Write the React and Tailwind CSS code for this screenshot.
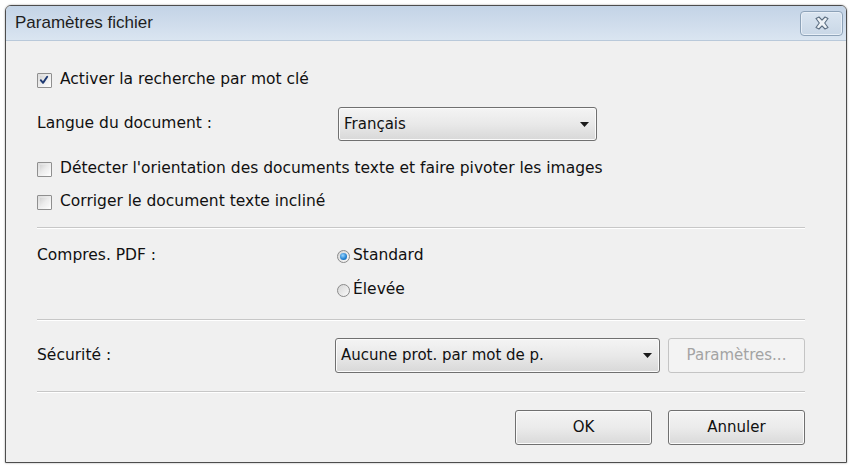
import React from "react";

const font = { fontFamily: '"DejaVu Sans", Verdana, sans-serif' };
const titleFont = { fontFamily: '"Liberation Sans", Arial, sans-serif' };

function Checkbox({ checked }) {
  return (
    <span className="relative flex h-[15px] w-[15px] shrink-0 items-center justify-center rounded-[1px] border border-[#8f8f8f] bg-gradient-to-br from-[#dcdcdc] to-[#ffffff]">
      <span className="absolute inset-[2px] bg-gradient-to-br from-[#d4d4d4] via-[#ececec] to-[#f8f8f8]" />
      {checked && (
        <svg viewBox="0 0 15 15" className="absolute inset-0 h-[13px] w-[13px]">
          <path d="M3.2 7.2 L5.8 10.2 L10.6 3.2" fill="none" stroke="#1f3a73" strokeWidth="2.2" strokeLinecap="round" strokeLinejoin="round" />
        </svg>
      )}
    </span>
  );
}

function Radio({ checked }) {
  return (
    <span className="relative flex h-[13px] w-[13px] shrink-0 items-center justify-center rounded-full border border-[#8a8a8a] bg-gradient-to-br from-[#d6d6d6] to-[#fafafa]">
      {checked && (
        <span className="h-[7px] w-[7px] rounded-full bg-[radial-gradient(circle_at_40%_35%,#9ad6ff,#1f7fd0_60%,#145a9e)]" />
      )}
    </span>
  );
}

function Arrow() {
  return (
    <svg viewBox="0 0 9 5" className="h-[5px] w-[9px]">
      <path d="M0 0 H9 L4.5 5 Z" fill="#1a1a1a" />
    </svg>
  );
}

function Separator() {
  return (
    <div className="flex flex-col">
      <div className="h-px bg-[#c7c7c7]" />
      <div className="h-px bg-white" />
    </div>
  );
}

function Button({ children, disabled, className = "" }) {
  return (
    <div
      className={
        "flex h-[35px] w-[137px] items-center justify-center rounded-[3px] border text-[15px] " +
        (disabled
          ? "border-[#c4c4c4] bg-[#f3f3f3] text-[#a3a3a3] "
          : "border-[#707070] bg-gradient-to-b from-[#f4f4f4] via-[#ebebeb] to-[#d9d9d9] text-[#111] shadow-[inset_0_0_0_1px_#fbfbfb] ") +
        className
      }
    >
      {children}
    </div>
  );
}

function Select({ value, className = "" }) {
  return (
    <div
      className={
        "flex h-[35px] items-center justify-between rounded-[3px] border border-[#707070] bg-gradient-to-b from-[#f4f4f4] via-[#e9e9e9] to-[#d8d8d8] pl-[5px] pr-[7px] text-[15px] text-[#111] shadow-[inset_0_0_0_1px_#fbfbfb] " +
        className
      }
    >
      <span>{value}</span>
      <Arrow />
    </div>
  );
}

export default function App() {
  return (
    <div className="h-[468px] w-[851px] bg-white pl-[5px] pr-[4px] pt-[5px] pb-[5px]" style={font}>
      <div className="flex h-full flex-col overflow-hidden rounded-t-[6px] border border-[#4d4d4d] shadow-[0_0_2px_rgba(0,0,0,0.4)]">
        <div className="flex h-[35px] shrink-0 items-center justify-between border-b border-[#b9c9da] bg-gradient-to-b from-[#c3d3e6] to-[#dae5f1] pl-[9px] pr-[3px]">
          <span className="text-[17px] text-[#1e1e1e]" style={titleFont}>Paramètres fichier</span>
          <div className="flex h-[25px] w-[43px] items-center justify-center rounded-[4px] border border-[#8da2b8] bg-gradient-to-b from-[#dae5f1] to-[#c9d7e6] shadow-[inset_0_0_0_1px_#e8eff7]">
            <svg viewBox="0 0 16 14" className="h-[14px] w-[16px]">
              <path
                d="M2 2.5 L5 1 L8 4.2 L11 1 L14 2.5 L10.7 7 L14 11.5 L11 13 L8 9.8 L5 13 L2 11.5 L5.3 7 Z"
                fill="#eef2f6"
                stroke="#5b6d80"
                strokeWidth="1.1"
                strokeLinejoin="round"
              />
            </svg>
          </div>
        </div>
        <div className="flex flex-1 flex-col bg-[#f0f0f0] pl-[31px] pr-[41px] pt-[27px] text-[15.5px] text-[#111]">
          <div className="flex h-[24px] items-center gap-[8px]">
            <Checkbox checked />
            <span>Activer la recherche par mot clé</span>
          </div>
          <div className="mt-[15px] flex h-[34px] items-center">
            <span className="w-[301px]">Langue du document :</span>
            <Select value="Français" className="!h-[34px] w-[259px]" />
          </div>
          <div className="mt-[16px] flex h-[24px] items-center gap-[8px]">
            <Checkbox />
            <span>Détecter l'orientation des documents texte et faire pivoter les images</span>
          </div>
          <div className="mt-[9px] flex h-[24px] items-center gap-[8px]">
            <Checkbox />
            <span>Corriger le document texte incliné</span>
          </div>
          <div className="mt-[13px]">
            <Separator />
          </div>
          <div className="mt-[15px] flex h-[24px] items-center">
            <span className="w-[300px]">Compres. PDF :</span>
            <div className="flex items-center gap-[3px]">
              <Radio checked />
              <span>Standard</span>
            </div>
          </div>
          <div className="mt-[10px] flex h-[24px] items-center">
            <span className="w-[300px]" />
            <div className="flex items-center gap-[3px]">
              <Radio />
              <span>Élevée</span>
            </div>
          </div>
          <div className="mt-[17px]">
            <Separator />
          </div>
          <div className="mt-[17px] flex h-[35px] items-center">
            <span className="w-[298px]">Sécurité :</span>
            <Select value="Aucune prot. par mot de p." className="w-[325px]" />
            <Button disabled className="ml-[8px]">Paramètres...</Button>
          </div>
          <div className="mt-[18px]">
            <Separator />
          </div>
          <div className="mt-[17px] flex justify-end gap-[16px]">
            <Button>OK</Button>
            <Button>Annuler</Button>
          </div>
        </div>
      </div>
    </div>
  );
}
